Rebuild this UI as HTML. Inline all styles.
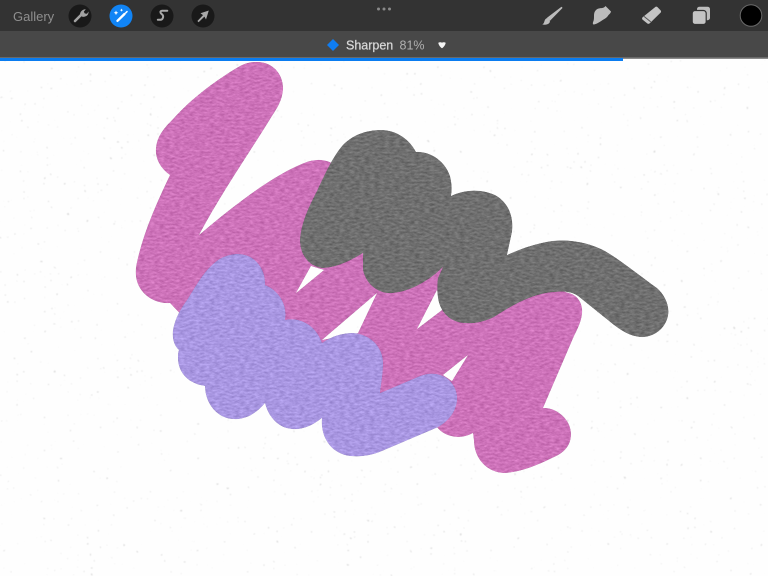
<!DOCTYPE html>
<html>
<head>
<meta charset="utf-8">
<style>
html,body{margin:0;padding:0;width:768px;height:576px;overflow:hidden;background:#fff}
svg{display:block;position:absolute;left:0;top:0}
text{font-family:"Liberation Sans",sans-serif}
</style>
</head>
<body>
<svg width="768" height="576" viewBox="0 0 768 576" xmlns="http://www.w3.org/2000/svg">
<defs>
<filter id="specks" x="0" y="0" width="100%" height="100%" color-interpolation-filters="sRGB">
  <feTurbulence type="fractalNoise" baseFrequency="0.3" numOctaves="2" seed="23"/>
  <feColorMatrix type="matrix" values="0 0 0 0 0.5  0 0 0 0 0.5  0 0 0 0 0.5  30 0 0 0 -23.7"/>
  <feGaussianBlur stdDeviation="0.45"/>
</filter>
<filter id="tex" x="0" y="0" width="768" height="576" filterUnits="userSpaceOnUse" color-interpolation-filters="sRGB">
  <feTurbulence type="fractalNoise" baseFrequency="0.2 0.5" numOctaves="4" seed="5" result="n"/>
  <feColorMatrix in="n" type="matrix" values="1 0 0 0 0  1 0 0 0 0  1 0 0 0 0  0 0 0 0 1" result="g"/>
  <feComposite in="SourceGraphic" in2="g" operator="arithmetic" k1="0" k2="1" k3="0.24" k4="-0.12" result="c"/>
  <feComposite in="c" in2="SourceAlpha" operator="in"/>
</filter>
</defs>

<rect width="768" height="576" fill="#fefefe"/>
<rect y="60" width="768" height="516" filter="url(#specks)" fill="#fff" opacity=".3"/>

<!-- pink -->
<path filter="url(#tex)" fill="#cd72b9" fill-rule="evenodd" d="M256 62C272 61 284 74 283 90C282 100 278 107 272 116C250 152 222 192 199 235C240 200 276 174 304 163C316 158 328 159 336 166L400 240L572 294C580 298 583 306 582 314C581 322 578 328 574 336L543 408C556 407 571 419 571 434C571 446 564 453 552 458C536 466 520 472 505 473C487 473 474 458 474 441L473 433C466 437 458 438 451 436C444 434 440 431 437 427L350 390L205 340L170 303C158 304 146 298 140 288C135 280 135 270 137 262C143 234 156 204 170 175C160 168 155 158 156 148C157 136 164 128 174 118C192 98 216 80 240 66C246 63 250 62 256 62Z M296 293L311 266L324 270Z M377 293L322 340L358 333Z M437 290L417 329L442 310Z M468 355L443 375L452 381Z"/>

<!-- gray -->
<path filter="url(#tex)" fill="#6f6f6f" d="M381 130C397 130 410 140 416 152C430 151 445 161 450 176C452 184 452 190 451 196C465 189 482 189 495 195C508 202 514 216 512 232L507 255C522 248 538 243 552 241C572 239 590 243 605 251C622 261 640 276 657 288C665 295 670 306 668 316C665 330 652 338 640 337C630 336 622 331 614 325L578 296C572 292 565 291 555 292C534 293 514 304 494 317C484 322 474 324 464 323C450 322 440 312 438 298C437 291 437 284 438 278L443 267C430 280 410 292 392 293C378 294 366 284 363 270L363 253C352 260 336 268 322 268C308 266 300 254 300 240C301 224 308 208 317 191C324 176 332 158 342 146C352 135 366 130 381 130Z"/>

<!-- purple -->
<path filter="url(#tex)" fill="#a997e2" d="M238 254C254 254 266 268 265 285C278 290 288 304 285 320C304 316 318 330 322 343C332 336 342 333 353 333C370 334 384 347 383 365C383 374 381 384 380 393L420 376C430 372 440 373 448 379C456 386 459 396 456 406C453 416 445 424 436 428L382 451C370 456 360 457 350 456C332 454 320 438 322 418C312 426 302 430 292 429C278 428 268 416 265 403C258 412 246 420 234 419C218 419 205 404 205 386C190 384 178 374 178 358C178 354 178 352 179 350C174 346 172 338 173 330C175 318 181 308 187 300C196 286 204 270 218 260C224 256 231 254 238 254Z"/>

<!-- top bars -->
<rect width="768" height="31" fill="#333333"/>
<rect y="31" width="768" height="27" fill="#484848"/>
<rect y="57.500" width="768" height="1.500" fill="#8a8a8a"/>
<rect y="58" width="623" height="3" fill="#0a7cf0"/>

<text x="13" y="21" font-size="13" fill="#8f8f8f">Gallery</text>

<circle cx="80" cy="16" r="11.500" fill="#191919"/>
<circle cx="121" cy="16" r="11.500" fill="#1184f5"/>
<circle cx="162" cy="16" r="11.500" fill="#191919"/>
<circle cx="203" cy="16" r="11.500" fill="#191919"/>

<!-- wrench -->
<path d="M75 21L81.500 14.500" stroke="#a2a2a2" stroke-width="2.600" stroke-linecap="round"/>
<path d="M80 15.500C79.800 12 82 9.500 85.800 9.300L83.800 11.800L84.800 13.500L87 13.700L88.500 11.500C88.800 14.800 86.500 17 82.500 16.800Z" fill="#a2a2a2"/>
<!-- wand -->
<path d="M117.500 20.800L124.500 14" stroke="#fff" stroke-width="2.400" stroke-linecap="round"/>
<path d="M125.800 12.800L127 11.600" stroke="#fff" stroke-width="1.500" stroke-linecap="round"/>
<path d="M116 10.500l.7 1.600 1.600.7-1.600.7-.7 1.600-.7-1.600-1.600-.7 1.600-.7zM121.500 8.500l.5 1.100 1.100.5-1.100.5-.5 1.100-.5-1.100-1.100-.5 1.100-.5z" fill="#fff"/>
<!-- S -->
<path d="M167.300 10.800H162C160.500 10.800 160 12 160.700 13L162.800 15.200C163.600 16.600 162.800 19.500 160.800 19.800H157.800" fill="none" stroke="#a8a8a8" stroke-width="2" stroke-linejoin="round" stroke-linecap="round"/>
<!-- arrow -->
<path d="M208.800 10.500L206 19.500L204.400 16.600L198.600 22.200L197.400 21L203 15.100L200.500 13.300Z" fill="#a8a8a8"/>

<circle cx="378.500" cy="9" r="1.500" fill="#8a8a8a"/>
<circle cx="384" cy="9" r="1.500" fill="#8a8a8a"/>
<circle cx="389.500" cy="9" r="1.500" fill="#8a8a8a"/>

<!-- brush -->
<path d="M561.500 6.800L562.600 7.900L550 20.800L547 17.800Z" fill="#bcbcbc"/>
<path d="M547.200 18C545.400 18.600 544.800 20 544.400 21.400C544 23 543.500 23.700 542.300 24.400C544.500 25.200 548.200 24.600 549.500 22.800C550.600 21.100 549.600 19.300 547.200 18Z" fill="#bcbcbc"/>
<!-- smudge -->
<path d="M605.500 6L611 11.500C610.800 13 609.500 14 608.500 15C607.500 17 605.500 18.500 603.500 19.500C600.500 21.500 596 24.500 593.500 24.500C592.500 24 592.800 22.500 593.500 21C594 19.500 594 17.500 594 15.500C594 11 596.500 8.500 600 8.200C602 8 603.800 8.300 605.500 6Z" fill="#bcbcbc"/>
<!-- eraser -->
<path d="M655 7.200C655.800 6.500 656.800 6.500 657.600 7.200L660.500 10.200C661.300 11 661.300 12 660.500 12.800L649.800 23.300C649 24 647.900 24 647.200 23.400L642.700 19.800C641.900 19 641.900 18 642.600 17.200Z" fill="#c4c4c4"/>
<path d="M644 16.400L650.800 21.900" stroke="#555" stroke-width="1"/>
<!-- layers -->
<rect x="697" y="6.700" width="13" height="13.500" rx="2.500" fill="#bdbdbd"/>
<rect x="692.200" y="10.500" width="14" height="14" rx="2.800" fill="#c4c4c4" stroke="#333" stroke-width="1.200"/>
<!-- colour -->
<circle cx="751" cy="15.500" r="10.800" fill="#000" stroke="#6a6a6a" stroke-width="1"/>

<!-- sharpen label -->
<path d="M333 39L339 45L333 51L327 45Z" fill="#0f7df2"/>
<text x="346" y="49.500" font-size="12.500" fill="#d8d8d8" stroke="#d8d8d8" stroke-width=".25">Sharpen</text>
<text x="399.500" y="49.500" font-size="12.500" fill="#b0b0b0">81%</text>
<path d="M438.500 42.600C439.500 42 441.200 42.300 442 42.600C442.800 42.300 444.500 42 445.500 42.600C446.300 43.400 443.500 47.800 442 48.200C440.500 47.800 437.700 43.400 438.500 42.600Z" fill="#f4f4f4"/>
</svg>
</body>
</html>
